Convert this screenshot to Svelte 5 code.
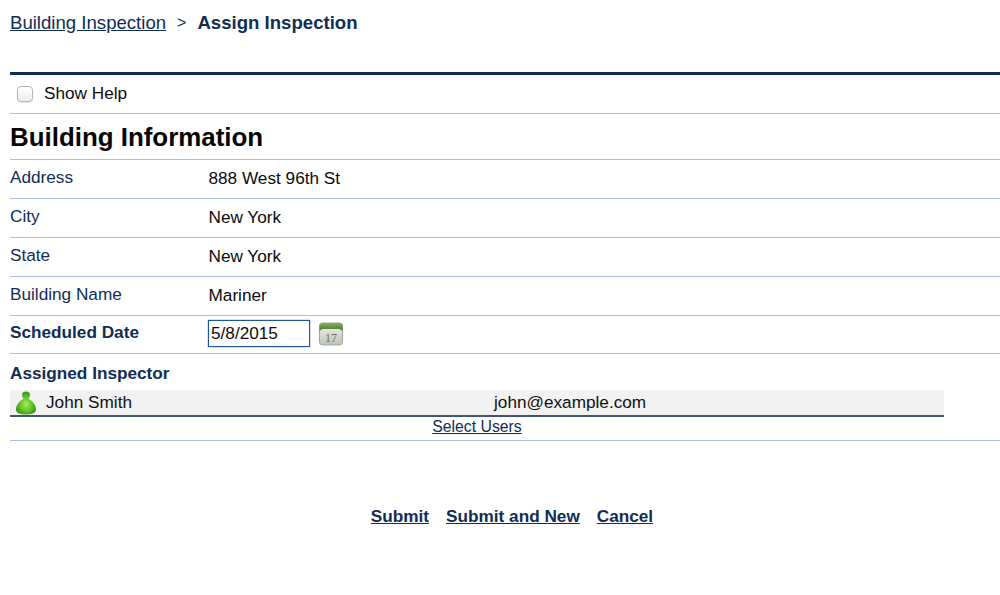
<script>
  const fields = [
    { label: 'Address', value: '888 West 96th St' },
    { label: 'City', value: 'New York' },
    { label: 'State', value: 'New York' },
    { label: 'Building Name', value: 'Mariner' }
  ];
</script>

<main class="page">
  <nav class="crumbs">
    <a href="#top">Building Inspection</a>
    <span class="sep">&gt;</span>
    <strong>Assign Inspection</strong>
  </nav>

  <label class="help">
    <input type="checkbox" />
    <span>Show Help</span>
  </label>

  <h1>Building Information</h1>

  {#each fields as field}
    <div class="row">
      <div class="label">{field.label}</div>
      <div class="value">{field.value}</div>
    </div>
  {/each}

  <div class="row date-row">
    <div class="label strong">Scheduled Date</div>
    <input class="date" type="text" value="5/8/2015" />
    <svg class="cal" width="24" height="24" viewBox="0 0 24 24" aria-hidden="true">
      <defs>
        <linearGradient id="calTop" x1="0" y1="0" x2="0" y2="1">
          <stop offset="0" stop-color="#86ad62" />
          <stop offset="1" stop-color="#447a28" />
        </linearGradient>
        <linearGradient id="calBody" x1="0" y1="0" x2="0" y2="1">
          <stop offset="0" stop-color="#f2f3ee" />
          <stop offset="1" stop-color="#bfc3b6" />
        </linearGradient>
      </defs>
      <rect x="0.5" y="1" width="23" height="22" rx="3" fill="url(#calBody)" stroke="#a3a799" />
      <path d="M0.5 9 V4 a3 3 0 0 1 3 -3 H20.5 a3 3 0 0 1 3 3 V9 L20.5 7 H3.5 Z" fill="url(#calTop)" />
      <text x="12" y="20" text-anchor="middle" class="cal-num">17</text>
    </svg>
  </div>

  <section class="assigned">
    <h2>Assigned Inspector</h2>
    <div class="user">
      <svg class="avatar" width="22" height="24" viewBox="0 0 22 24" aria-hidden="true">
        <defs>
          <radialGradient id="userFill" cx="0.5" cy="0.55" r="0.6">
            <stop offset="0" stop-color="#a6ec5c" />
            <stop offset="0.6" stop-color="#55bb1e" />
            <stop offset="1" stop-color="#2c8a10" />
          </radialGradient>
        </defs>
        <path d="M7 3.5 C7 1.5 9 0.5 11 0.5 C13 0.5 15 1.5 15 3.5 C15 5.5 14 7 13.5 8 C17.5 10 21 14 21 18.5 C21 22.5 16 23.5 11 23.5 C6 23.5 1 22.5 1 18.5 C1 14 4.5 10 8.5 8 C8 7 7 5.5 7 3.5 Z" fill="url(#userFill)" />
      </svg>
      <span class="name">John Smith</span>
      <span class="email">john@example.com</span>
    </div>
    <div class="select"><a href="#top">Select Users</a></div>
  </section>

  <footer class="actions">
    <a href="#top">Submit</a>
    <a href="#top">Submit and New</a>
    <a href="#top">Cancel</a>
  </footer>
</main>

<style>
  :global(body) {
    background: #fff;
  }

  .page {
    height: 595px;
    box-sizing: border-box;
    padding-left: 10px;
    font-family: "Liberation Sans", Arial, sans-serif;
    font-size: 17.2px;
    color: #0b0b0b;
    overflow: hidden;
  }

  a {
    color: #0f2d55;
  }

  .crumbs {
    height: 72px;
    box-sizing: border-box;
    padding-top: 12px;
    font-size: 18.6px;
    line-height: 21px;
    color: #0f2d55;
    display: flex;
    gap: 11px;
  }

  .sep {
    font-size: 16px;
  }

  .help {
    box-sizing: border-box;
    border-top: 3px solid #0f2d55;
    border-bottom: 1px solid #a9bfe3;
    height: 42px;
    display: flex;
    align-items: center;
    padding-left: 7px;
    gap: 11px;
  }

  .help span {
    margin-top: -2px;
  }

  .help input {
    width: 16px;
    height: 16px;
    margin: 0;
    appearance: none;
    background: linear-gradient(#fff, #ececec);
    border: 1px solid #b4b4b4;
    border-radius: 4px;
    box-shadow: 0 1px 1px rgba(0, 0, 0, 0.12);
  }

  h1 {
    margin: 0;
    height: 46px;
    box-sizing: border-box;
    border-bottom: 1px solid #a9bfe3;
    font-size: 25.9px;
    line-height: 46px;
    color: #050505;
  }

  .row {
    height: 39px;
    box-sizing: border-box;
    border-bottom: 1px solid #a9bfe3;
    display: grid;
    grid-template-columns: 198.5px auto 1fr;
    align-items: center;
  }

  .label {
    color: #0f2d55;
    margin-top: -4px;
  }

  .value {
    margin-top: -2px;
  }

  .strong {
    font-weight: 700;
    margin-top: -4px;
  }

  .date-row {
    height: 38px;
    grid-template-columns: 198px auto 1fr;
  }

  .date {
    width: 102px;
    height: 27px;
    box-sizing: border-box;
    margin: -3px 0 0;
    padding: 0 0 0 2px;
    border: 1px solid #1a55a5;
    box-shadow: 0 0 1px #1a55a5;
    font: inherit;
    color: #0b0b0b;
    outline: none;
  }

  .cal {
    margin: -1px 0 0 9px;
  }

  .cal-num {
    font-family: "Liberation Serif", serif;
    font-size: 12px;
    fill: #66705c;
  }

  .assigned {
    border-bottom: 1px solid #a9bfe3;
    height: 87px;
    box-sizing: border-box;
  }

  h2 {
    margin: 0;
    height: 36px;
    box-sizing: border-box;
    padding-top: 9px;
    font-size: 17.2px;
    line-height: 20px;
    color: #0f2d55;
  }

  .user {
    width: 934px;
    height: 27px;
    box-sizing: border-box;
    background: #f1f1f1;
    border-bottom: 2px solid #3d5474;
    display: grid;
    grid-template-columns: 36px 448px 1fr;
    align-items: center;
    color: #111;
  }

  .avatar {
    margin-left: 5px;
  }

  .select {
    width: 934px;
    text-align: center;
    line-height: 19px;
    font-size: 15.8px;
  }

  .actions {
    display: flex;
    justify-content: center;
    gap: 17px;
    margin: 65px 0 0 14px;
    font-size: 17.2px;
    line-height: 21px;
    font-weight: 700;
  }
</style>
